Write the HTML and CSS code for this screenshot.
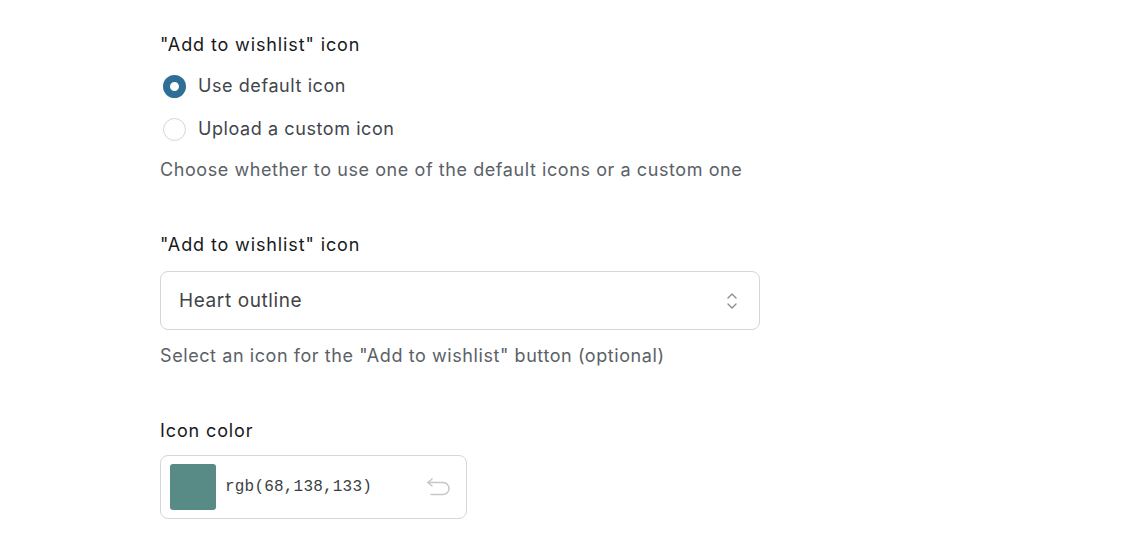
FILE: index.html
```html
<!DOCTYPE html>
<html>
<head>
<meta charset="utf-8">
<link rel="stylesheet" href="styles.css">
</head>
<body>
<div class="page">
  <div class="field">
    <div class="label">"Add to wishlist" icon</div>
    <div class="radios">
      <label class="radio-row"><span class="radio checked"></span><span class="opt">Use default icon</span></label>
      <label class="radio-row"><span class="radio"></span><span class="opt">Upload a custom icon</span></label>
    </div>
    <div class="help">Choose whether to use one of the default icons or a custom one</div>
  </div>

  <div class="field">
    <div class="label">"Add to wishlist" icon</div>
    <div class="select">
      <span class="select-text">Heart outline</span>
      <svg class="chev" width="14" height="22" viewBox="0 0 14 22" fill="none" stroke="#8a8f94" stroke-width="1.4" stroke-linecap="round" stroke-linejoin="round">
        <path d="M3 8 L7 4 L11 8"/>
        <path d="M3 14 L7 18 L11 14"/>
      </svg>
    </div>
    <div class="help">Select an icon for the "Add to wishlist" button (optional)</div>
  </div>

  <div class="field color-field">
    <div class="label">Icon color</div>
    <div class="color-box">
      <span class="swatch"></span>
      <span class="color-text">rgb(68,138,133)</span>
      <svg class="undo" width="28" height="22" viewBox="0 0 28 22" fill="none" stroke="#c4c7ca" stroke-width="1.5" stroke-linecap="round" stroke-linejoin="round">
        <path d="M8 3 L4 6.5 L8 10"/>
        <path d="M4 6.5 H19 A6 6 0 0 1 19 18.5 H7"/>
      </svg>
    </div>
  </div>
</div>
</body>
</html>
```

FILE: styles.css
```css
* { box-sizing: border-box; }
html, body { margin: 0; padding: 0; background: #ffffff; }
body {
  font-family: Inter, "Noto Sans", "Liberation Sans", sans-serif;
  color: #202223;
}
.page {
  padding: 33px 0 0 160px;
  display: flex;
  flex-direction: column;
  gap: 51px;
}
.field {
  display: flex;
  flex-direction: column;
  gap: 14px;
}
.color-field { gap: 12px; }
.label {
  font-size: 18px;
  line-height: 24px;
  font-weight: 400;
  letter-spacing: 0.88px;
  color: #17191c;
}
.radios {
  display: flex;
  flex-direction: column;
  gap: 13px;
}
.radio-row {
  display: flex;
  align-items: center;
  height: 30px;
  gap: 12px;
  padding-left: 3px;
}
.radio {
  width: 23px;
  height: 23px;
  border-radius: 50%;
  border: 1px solid #d3d5d8;
  background: #fff;
  flex: none;
}
.radio.checked {
  border: 7.5px solid #2f6f95;
  background: #fff;
}
.opt {
  font-size: 18px;
  line-height: 24px;
  letter-spacing: 0.58px;
  color: #41464b;
}
.help {
  font-size: 18px;
  line-height: 24px;
  letter-spacing: 0.58px;
  color: #5b6167;
}
.select {
  width: 600px;
  height: 59px;
  border: 1px solid #d4d6d9;
  border-radius: 8px;
  display: flex;
  align-items: center;
  justify-content: space-between;
  padding: 0 20px 0 18px;
}
.select-text {
  font-size: 19px;
  letter-spacing: 0.6px;
  color: #3f4449;
}
.color-box {
  width: 307px;
  height: 64px;
  border: 1px solid #d4d6d9;
  border-radius: 8px;
  display: flex;
  align-items: center;
  padding: 0 14px 0 9px;
}
.swatch {
  width: 46px;
  height: 46px;
  border-radius: 3px;
  background: #588a86;
  flex: none;
}
.color-text {
  font-family: "Liberation Mono", "DejaVu Sans Mono", monospace;
  font-size: 16px;
  letter-spacing: 0.2px;
  color: #3a3f44;
  margin-left: 9px;
  flex: 1;
}
.undo { flex: none; }
```
